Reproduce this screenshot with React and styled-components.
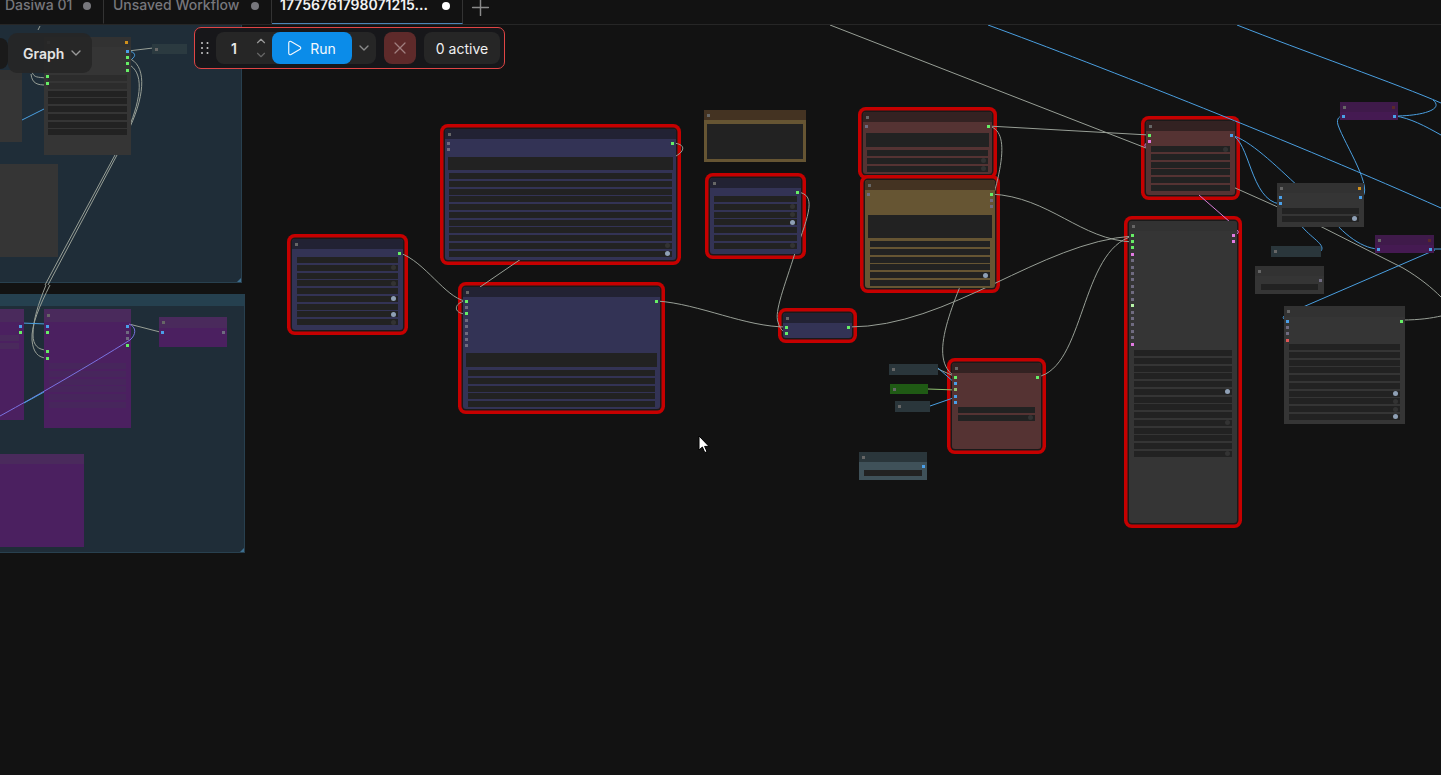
import React from "react";
import styled, { createGlobalStyle } from "styled-components";
import { ChevronDown, ChevronUp, ChevronLeft, Play, Plus, X } from "lucide-react";

const CANVAS_TOP = 25;

const GlobalStyle = createGlobalStyle`
    html, body {
        margin: 0;
        padding: 0;
        height: 100%;
        background: #121212;
        overflow: hidden;
    }
    #root {
        height: 100%;
    }
`;

const Page = styled.div`
    width: 1441px;
    height: 775px;
    display: flex;
    flex-direction: column;
    overflow: hidden;
    background: #121212;
    font-family: Inter, "Liberation Sans", sans-serif;
`;

const TabBar = styled.div`
    flex: none;
    height: 24px;
    display: flex;
    border-bottom: 1px solid #262626;
    background: #121212;
    overflow: hidden;
`;

const Tab = styled.div`
    width: ${props => props.$w}px;
    height: 24px;
    box-sizing: border-box;
    flex: none;
    display: flex;
    align-items: flex-start;
    justify-content: space-between;
    padding: 0 12px 0 ${props => props.$pad}px;
    border-right: 1px solid #333;
    border-bottom: 1px solid ${props => (props.$active ? "#4a86b8" : "transparent")};
`;

const TabLabel = styled.span`
    margin-top: -5px;
    font-size: 14px;
    line-height: 20px;
    font-weight: ${props => (props.$active ? 600 : 500)};
    color: ${props => (props.$active ? "#f2f2f2" : "#77777c")};
    white-space: nowrap;
`;

const TabDot = styled.span`
    width: 8px;
    height: 8px;
    margin-top: 2px;
    border-radius: 50%;
    background: ${props => (props.$active ? "#ffffff" : "#77777c")};
`;

const AddTab = styled.div`
    margin: -6px 0 0 4px;
    color: #8a8a8a;
    display: flex;
`;

const Canvas = styled.div`
    position: relative;
    flex: 1;
    overflow: hidden;
`;

const Group = styled.div`
    position: absolute;
    left: 0;
    top: ${props => props.$y - CANVAS_TOP}px;
    width: ${props => props.$w}px;
    height: ${props => props.$h}px;
    background: #1f2d38;
    border-right: 1px solid #28404f;
    border-bottom: 1px solid #28404f;
    box-sizing: border-box;

    &::after {
        content: "";
        position: absolute;
        right: 0;
        bottom: 0;
        border-style: solid;
        border-width: 0 0 4px 4px;
        border-color: transparent transparent #3d6f90 transparent;
    }
`;

const GroupBand = styled.div`
    height: 12px;
    background: #25404f;
`;

const LinkLayer = styled.svg`
    position: absolute;
    left: 0;
    top: 0;
    width: 1441px;
    height: 750px;
    fill: none;
    pointer-events: none;
`;

/* the red ring sits under the links, the node bodies sit over them */
const SelectionRing = styled.div`
    position: absolute;
    left: ${props => props.$x}px;
    top: ${props => props.$y - CANVAS_TOP}px;
    width: ${props => props.$w}px;
    height: ${props => props.$h}px;
    border-radius: 3px;
    box-shadow: 0 0 0 1.5px #1a1a1a, 0 0 0 5px #c60000;
`;

const Node = styled.div`
    position: absolute;
    left: ${props => props.$x}px;
    top: ${props => props.$y - CANVAS_TOP}px;
    width: ${props => props.$w}px;
    height: ${props => props.$h}px;
    display: flex;
    flex-direction: column;
    background: ${props => props.$bg};
    border-radius: ${props => (props.$sel ? "3px" : "0")};
`;

const NodeTitle = styled.div`
    flex: none;
    height: ${props => props.$h}px;
    display: flex;
    align-items: center;
    justify-content: space-between;
    padding: 0 3px;
    background: ${props => props.$color};
    border-radius: ${props => (props.$sel ? "3px 3px 0 0" : "0")};
`;

const TitleMark = styled.span`
    width: 3px;
    height: 3px;
    background: ${props => props.$color || "#666666"};
`;

const SlotArea = styled.div`
    flex: none;
    height: ${props => props.$h}px;
    display: flex;
    justify-content: space-between;
    padding: 2.5px 1.75px 0;
    box-sizing: border-box;
`;

const SlotColumn = styled.div`
    display: flex;
    flex-direction: column;
    gap: 3.43px;
`;

const Slot = styled.span`
    position: relative;
    z-index: 1;
    width: 3px;
    height: 3px;
    flex: none;
    background: ${props => props.$color};
`;

const TextArea = styled.div`
    flex: none;
    height: ${props => props.$h}px;
    margin: 0 3px 3px;
    background: ${props => props.$tone};
`;

const WidgetList = styled.div`
    display: flex;
    flex-direction: column;
    gap: 1.75px;
    padding: 0 ${props => props.$pad}px;
`;

const Widget = styled.div`
    height: 6px;
    display: flex;
    align-items: center;
    justify-content: flex-end;
    padding-right: 2.5px;
    background: ${props => props.$tone};
`;

const Toggle = styled.span`
    width: 5px;
    height: 5px;
    border-radius: 50%;
    background: ${props => (props.$on ? "#8fa0b5" : "#333333")};
`;

const Toolbar = styled.div`
    position: absolute;
    left: 194px;
    top: 2px;
    height: 42px;
    box-sizing: border-box;
    display: flex;
    align-items: center;
    padding: 4px 4px 4px 0;
    border: 1px solid #e04545;
    border-radius: 7px;
    background: #17171a;
`;

const Grip = styled.svg`
    width: 21px;
    height: 14px;
    flex: none;
`;

const RunGroup = styled.div`
    display: flex;
    align-items: stretch;
    height: 32px;
    border-radius: 8px;
    background: #262626;
`;

const Stepper = styled.div`
    width: 56px;
    display: flex;
    align-items: center;
    justify-content: space-between;
    padding: 0 4px 0 15px;
    box-sizing: border-box;
    font-size: 14px;
    font-weight: 600;
    color: #e8e8e8;
`;

const StepArrows = styled.div`
    display: flex;
    flex-direction: column;
    color: #9a9a9a;

    svg:last-child {
        color: #666666;
    }
`;

const RunButton = styled.div`
    width: 80px;
    display: flex;
    align-items: center;
    justify-content: center;
    gap: 7px;
    padding-right: 3px;
    box-sizing: border-box;
    border-radius: 8px;
    background: #0b8ce9;
    color: #f4f8fc;
    font-size: 14px;
    font-weight: 400;
`;

const RunMenu = styled.div`
    width: 24px;
    display: flex;
    align-items: center;
    justify-content: center;
    color: #8a8a8a;
`;

const CancelButton = styled.div`
    width: 32px;
    height: 32px;
    margin-left: 8px;
    display: flex;
    align-items: center;
    justify-content: center;
    border-radius: 8px;
    background: #5e2a2a;
    color: #a07f7f;
`;

const ActiveCount = styled.div`
    width: 76px;
    height: 32px;
    margin-left: 8px;
    display: flex;
    align-items: center;
    justify-content: center;
    border-radius: 8px;
    background: #262626;
    color: #f0f0f0;
    font-size: 14px;
    font-weight: 400;
    white-space: nowrap;
`;

const SidePill = styled.div`
    position: absolute;
    left: -22px;
    top: 13px;
    width: 30px;
    height: 31px;
    display: flex;
    align-items: center;
    justify-content: flex-end;
    padding-right: 5px;
    box-sizing: border-box;
    border-radius: 8px;
    background: #1a1a1a;
    color: #c8c8c8;
`;

const ViewPanel = styled.div`
    position: absolute;
    left: 8px;
    top: 8px;
    width: 84px;
    height: 40px;
    display: flex;
    align-items: center;
    gap: 4px;
    padding-left: 15px;
    box-sizing: border-box;
    border-radius: 9px;
    background: rgba(38, 38, 38, 0.9);
    color: #e4e4e4;
    font-size: 14px;
    font-weight: 600;

    svg {
        color: #9a9a9a;
    }
`;

const Cursor = styled.svg`
    position: absolute;
    left: 698px;
    top: ${435 - CANVAS_TOP}px;
    width: 12px;
    height: 20px;
`;

const G = "#66ee66";
const N = "#6f6b80";
const B = "#4a9fe8";
const P = "#e27ae2";
const L = "#b8f5a8";
const RED = "#e05555";
const NONE = "transparent";

const blue = { color: "#222233", bg: "#333355" };
const yellow = { color: "#443322", bg: "#665533" };
const red = { color: "#332222", bg: "#553333" };
const slate = { color: "#2a363b", bg: "#3f5159" };
const gray = { color: "#323232", bg: "#353535" };
const green = { color: "#1f5a14", bg: "#1f5a14" };
const purple = { color: "#4a2a5c", bg: "#4b2060" };
const violet = { color: "#3f1a4a", bg: "#451a52" };

const nodes = [
    { x: 44, y: 37, w: 87, h: 118, t: 10, ...gray, slots: 28, ins: [NONE, NONE, NONE, NONE, G, G], outs: [B, G, G, G], mark: "#d0901c", rows: "--------", pad: 4, faint: 2 },
    { x: -60, y: 70, w: 82, h: 72, t: 10, ...gray, slots: 0, rows: "" },
    { x: -60, y: 164, w: 118, h: 93, t: 10, ...gray, color: "#353535", slots: 0, rows: "" },
    { x: 152, y: 44, w: 35, h: 10, t: 10, color: "#2b3a40", bg: "#2b3a40", slots: 0, rows: "" },

    { x: -60, y: 309, w: 84, h: 111, t: 13, ...purple, slots: 13, outs: [B, G], rows: "--", pad: 5, tone: "#4a2a5c" },
    { x: 44, y: 309, w: 87, h: 119, t: 13, ...purple, slots: 41, ins: [B, G, NONE, NONE, G, G], outs: [B, N, N, G], rows: "------", pad: 5, tone: "#47265c" },
    { x: 159, y: 317, w: 68, h: 30, t: 11, ...purple, slots: 19, ins: [B], outs: [N], rows: "" },
    { x: -60, y: 454, w: 144, h: 93, t: 10, ...purple, slots: 0, rows: "" },

    { x: 292, y: 239, w: 111, h: 91, t: 10, ...blue, sel: true, slots: 8, outs: [G], rows: "-d-d-l-ld", pad: 5 },
    { x: 445, y: 129, w: 231, h: 131, t: 10, ...blue, sel: true, slots: 18, ins: [N, N], outs: [G], area: 13, rows: "---------dl", pad: 4 },
    { x: 463, y: 287, w: 197, h: 122, t: 10, ...blue, sel: true, slots: 56, ins: [G, N, G, N, N, N, N, N], outs: [G], area: 14, rows: "-----", pad: 5 },
    { x: 704, y: 110, w: 102, h: 52, t: 10, ...yellow, slots: 4, area: 35, rows: "" },
    { x: 710, y: 178, w: 91, h: 76, t: 10, ...blue, sel: true, slots: 8, outs: [G], rows: "-ddl--d", pad: 4 },
    { x: 863, y: 112, w: 129, h: 62, t: 10, ...red, sel: true, slots: 11, ins: [N], outs: [G], area: 14, rows: "-dd", pad: 4 },
    { x: 865, y: 180, w: 130, h: 108, t: 10, ...yellow, sel: true, slots: 25, ins: [N], outs: [G, N, N], area: 23, rows: "----l-", pad: 5 },
    { x: 783, y: 313, w: 69, h: 25, t: 10, ...blue, sel: true, slots: 15, ins: [G, G], outs: [G], rows: "" },
    { x: 952, y: 363, w: 89, h: 86, t: 10, ...red, sel: true, slots: 34, ins: [G, B, "#8fc070", B, B], outs: [G], rows: "-d", pad: 6 },
    { x: 889, y: 364, w: 49, h: 11, t: 11, ...slate, slots: 0, rows: "" },
    { x: 890, y: 384, w: 38, h: 10, t: 10, ...green, slots: 0, rows: "" },
    { x: 895, y: 401, w: 35, h: 11, t: 11, ...slate, slots: 0, rows: "" },
    { x: 859, y: 452, w: 68, h: 28, t: 10, ...slate, slots: 8, outs: [B], rows: "-", pad: 5 },

    { x: 1146, y: 121, w: 89, h: 74, t: 10, ...red, sel: true, slots: 15, ins: [G, P], outs: [B], rows: "d-----", pad: 5 },
    { x: 1129, y: 221, w: 108, h: 302, t: 10, ...gray, sel: true, slots: 119, ins: [G, G, G, P, N, N, N, N, N, N, N, L, N, N, N, N, N, P], outs: [P, P], rows: "-----l---d---d", pad: 5 },
    { x: 1277, y: 183, w: 87, h: 44, t: 10, ...gray, slots: 15, ins: [B, B], outs: [B], mark: "#d0901c", rows: "-l", pad: 5 },
    { x: 1340, y: 102, w: 58, h: 18, t: 10, ...violet, slots: 8, ins: [B], outs: [B], mark: "#5a2a2a", rows: "" },
    { x: 1375, y: 235, w: 59, h: 18, t: 10, ...violet, slots: 8, ins: [B], outs: [B], mark: "#5a2a2a", rows: "" },
    { x: 1271, y: 246, w: 50, h: 11, t: 11, ...slate, slots: 0, rows: "" },
    { x: 1255, y: 266, w: 69, h: 28, t: 10, ...gray, slots: 8, outs: [N], rows: "-", pad: 6 },
    { x: 1284, y: 306, w: 121, h: 118, t: 11, ...gray, slots: 27, ins: [B, N, N, RED], outs: [G], rows: "------lddl", pad: 5 },
];

const GREY = "#989f96";
const BLUE = "#4a9fe0";
const PINK = "#d77ad7";

const links = [
    // group one
    ["M38 30 L40 26", GREY],
    ["M22 120 L44 109", BLUE],
    ["M128 51 L153 48", GREY],
    ["M128 51 C136 52 136 56 132 59", BLUE],
    ["M128 58 C146 64 146 92 130 127 L115 155 L45 285", GREY],
    ["M128 64 C144 72 142 96 128 130 L117 155 L48 285", GREY],
    ["M32 72 C34 78 38 77 46 78", GREY],
    ["M31 74 C32 84 38 85 46 85", GREY],
    // group two
    ["M46 285 C38 305 33 320 33 335 C33 345 38 350 47 350", GREY],
    ["M50 285 C40 305 31 325 32 340 C33 352 38 358 47 358", GREY],
    ["M21 323 L47 324", BLUE],
    ["M129 324 L160 332", GREY],
    // main graph
    ["M830 25 L1146 148", GREY],
    ["M988 25 C1100 66 1300 145 1441 208", BLUE],
    ["M1237 25 C1300 50 1400 85 1441 103", BLUE],
    ["M1395 116 C1420 116 1445 110 1433 100", BLUE],
    ["M1395 116 C1410 118 1425 126 1441 135", BLUE],
    ["M400 253 C425 262 445 297 465 301", GREY],
    ["M465 301 C454 303 453 313 465 314", GREY],
    ["M673 143 C686 144 685 151 676 156", GREY],
    ["M521 259 L480 287", GREY],
    ["M657 301 C700 304 745 327 787 327", GREY],
    ["M798 192 C816 195 810 212 795 253 C785 285 774 312 778 322 C780 330 784 332 787 334", GREY],
    ["M849 327 C950 327 1040 242 1133 236", GREY],
    ["M988 126 L1149 135", GREY],
    ["M988 126 C1012 130 1003 175 975 250 C955 300 925 360 956 377", GREY],
    ["M991 194 C1050 197 1080 240 1133 242", GREY],
    ["M1037 377 C1085 368 1080 250 1133 236", GREY],
    ["M938 369 L956 377", GREY],
    ["M938 368 L956 384", BLUE],
    ["M928 389 L956 390", "#8fc070"],
    ["M930 406 L956 397", BLUE],
    ["M1231 135 C1250 140 1275 165 1300 188", BLUE],
    ["M1231 135 C1250 140 1250 200 1280 204", BLUE],
    ["M1320 205 C1340 232 1360 248 1378 249", BLUE],
    ["M1300 224 C1310 238 1328 245 1320 252", BLUE],
    ["M1361 198 C1375 190 1345 145 1338 125 C1336 118 1340 116 1343 116", BLUE],
    ["M1233 187 L1280 208", GREY],
    ["M1300 216 L1403 268 C1420 278 1432 288 1441 297", GREY],
    ["M1149 142 C1144 143 1144 147 1147 148", PINK],
    ["M1199 195 L1230 222", PINK],
    ["M1233 228 C1240 230 1240 234 1233 236", PINK],
    ["M1431 249 L1441 249", BLUE],
    ["M1435 250 L1303 307 L1284 316 C1282 318 1284 320 1287 320", BLUE],
    ["M1402 320 C1420 320 1432 318 1441 316", GREY],
];

const overLinks = [
    ["M0 416 C40 394 90 365 130 340 C136 335 137 327 129 324", "#7a72e0"],
    ["M24 403 L44 392", BLUE],
];

function renderLinks(list) {
    return list.map(([d, stroke], index) => <path key={index} d={d} stroke={stroke} strokeWidth="1" />);
}

function NodeBox({ node }) {
    const tone = node.tone || "#222222";

    return (
        <Node $x={node.x} $y={node.y} $w={node.w} $h={node.h} $bg={node.bg} $sel={node.sel}>
            <NodeTitle $h={node.t} $color={node.color} $sel={node.sel}>
                <TitleMark />
                {node.mark && <TitleMark $color={node.mark} />}
            </NodeTitle>
            {node.slots > 0 && (
                <SlotArea $h={node.slots}>
                    <SlotColumn>
                        {(node.ins || []).map((color, index) => <Slot key={index} $color={color} />)}
                    </SlotColumn>
                    <SlotColumn>
                        {(node.outs || []).map((color, index) => <Slot key={index} $color={color} />)}
                    </SlotColumn>
                </SlotArea>
            )}
            {node.area && <TextArea $h={node.area} $tone={tone} />}
            {node.rows && (
                <WidgetList $pad={node.pad}>
                    {node.rows.split("").map((kind, index) => (
                        <Widget key={index} $tone={index < (node.faint || 0) ? "#2c2c2c" : tone}>
                            {kind !== "-" && <Toggle $on={kind === "l"} />}
                        </Widget>
                    ))}
                </WidgetList>
            )}
        </Node>
    );
}

function App() {
    return (
        <Page>
            <GlobalStyle />
            <TabBar>
                <Tab $w={104} $pad={5}>
                    <TabLabel>Dasiwa 01</TabLabel>
                    <TabDot />
                </Tab>
                <Tab $w={168} $pad={9}>
                    <TabLabel>Unsaved Workflow</TabLabel>
                    <TabDot />
                </Tab>
                <Tab $w={191} $pad={8} $active>
                    <TabLabel $active>17756761798071215...</TabLabel>
                    <TabDot $active />
                </Tab>
                <AddTab>
                    <Plus size={27} strokeWidth={1.3} />
                </AddTab>
            </TabBar>

            <Canvas>
                <Group $y={25} $w={242} $h={258} />
                <Group $y={294} $w={245} $h={259}>
                    <GroupBand />
                </Group>

                {nodes.filter(node => node.sel).map((node, index) => (
                    <SelectionRing key={index} $x={node.x} $y={node.y} $w={node.w} $h={node.h} />
                ))}

                <LinkLayer viewBox={`0 ${CANVAS_TOP} 1441 750`}>{renderLinks(links)}</LinkLayer>

                {nodes.map((node, index) => <NodeBox key={index} node={node} />)}

                <LinkLayer viewBox={`0 ${CANVAS_TOP} 1441 750`}>{renderLinks(overLinks)}</LinkLayer>

                <SidePill>
                    <ChevronLeft size={14} />
                </SidePill>
                <ViewPanel>
                    Graph
                    <ChevronDown size={16} />
                </ViewPanel>

                <Toolbar>
                    <Grip viewBox="0 0 21 14">
                        <g fill="#c8c8c8">
                            <circle cx="7" cy="2" r="1" />
                            <circle cx="12.5" cy="2" r="1" />
                            <circle cx="7" cy="7" r="1" />
                            <circle cx="12.5" cy="7" r="1" />
                            <circle cx="7" cy="12" r="1" />
                            <circle cx="12.5" cy="12" r="1" />
                        </g>
                    </Grip>
                    <RunGroup>
                        <Stepper>
                            1
                            <StepArrows>
                                <ChevronUp size={14} />
                                <ChevronDown size={14} />
                            </StepArrows>
                        </Stepper>
                        <RunButton>
                            <Play size={18} strokeWidth={1.5} />
                            Run
                        </RunButton>
                        <RunMenu>
                            <ChevronDown size={16} />
                        </RunMenu>
                    </RunGroup>
                    <CancelButton>
                        <X size={20} strokeWidth={1.5} />
                    </CancelButton>
                    <ActiveCount>0 active</ActiveCount>
                </Toolbar>

                <Cursor viewBox="0 0 12 20">
                    <path d="M1 1 L1 15 L4.4 12 L6.8 17.6 L9 16.6 L6.6 11.4 L11 11.4 Z" fill="#ffffff" stroke="#000000" strokeWidth="1" />
                </Cursor>
            </Canvas>
        </Page>
    );
}

export default App;
